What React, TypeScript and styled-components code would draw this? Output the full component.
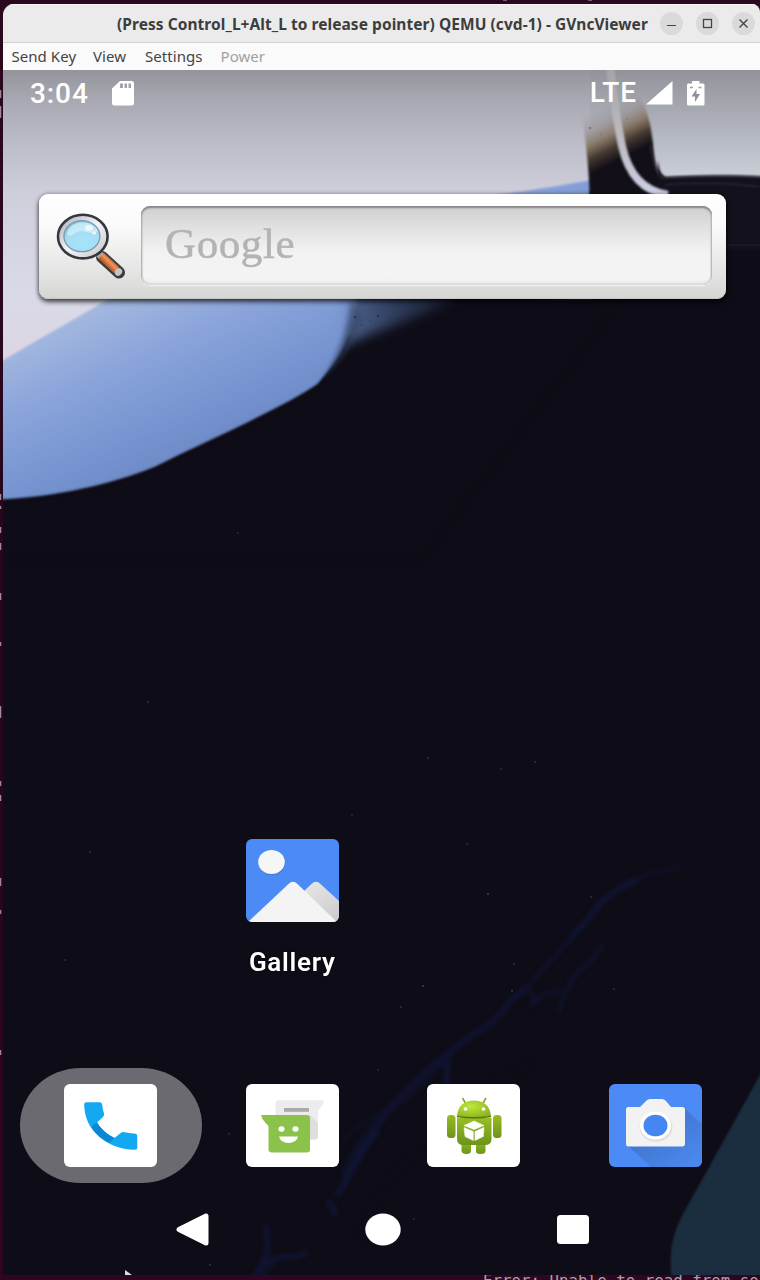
import React from "react";
import styled, { createGlobalStyle } from "styled-components";

const Global = createGlobalStyle`
  * { box-sizing: border-box; }
  html, body { margin: 0; padding: 0; background: #300a24; overflow: hidden; }
`;

const Desktop = styled.div`
  position: relative;
  width: 760px;
  height: 1280px;
  overflow: hidden;
  background: linear-gradient(#2c0820, #26061c 60%, #300522);
  padding: 4px 0 0 3px;
`;

const Window = styled.section`
  display: flex;
  flex-direction: column;
  width: 757px;
  height: 1271px;
  border-radius: 11px 8px 0 0;
  overflow: hidden;
  background: #0e0c17;
`;

const TitleBar = styled.header`
  display: flex;
  align-items: center;
  flex: 0 0 39px;
  height: 39px;
  padding-right: 5px;
  background: #ebebeb;
  border-bottom: 1px solid #d2d2d2;
  box-shadow: inset 0 1px #f6f6f6;
`;

const Title = styled.h1`
  flex: 0 0 531px;
  margin: 0 0 0 114px;
  padding-top: 1px;
  font: 700 15.5px/36px "Noto Sans", "Open Sans", sans-serif;
  letter-spacing: 0.053px;
  white-space: nowrap;
  color: #3d3d3d;
`;

const Controls = styled.div`
  display: flex;
  gap: 13px;
  margin-left: 12px;
`;

const ControlButton = styled.button`
  display: grid;
  place-items: center;
  width: 23px;
  height: 23px;
  padding: 0;
  border: 0;
  border-radius: 50%;
  background: #dadada;
`;

const MenuBar = styled.nav`
  display: flex;
  flex: 0 0 27px;
  height: 27px;
  padding: 0 8px 0 8.5px;
  gap: 16.5px;
  background: #fafafa;
`;

const MenuItem = styled.span<{ $width: number; $disabled?: boolean }>`
  width: ${(p) => p.$width}px;
  font: 400 15px/27px "Noto Sans", "Open Sans", sans-serif;
  letter-spacing: 0.05px;
  white-space: nowrap;
  color: ${(p) => (p.$disabled ? "#a0a0a0" : "#444")};
`;

const Screen = styled.main`
  position: relative;
  display: flex;
  flex-direction: column;
  flex: 1;
  isolation: isolate;
`;

const Wallpaper = styled.svg`
  position: absolute;
  inset: 0;
  z-index: -1;
`;

const StatusBar = styled.div`
  display: flex;
  align-items: center;
  flex: 0 0 46px;
  height: 46px;
  padding: 0 55px 0 27px;
  color: #fff;
`;

const Clock = styled.time`
  width: 82px;
  padding-top: 2px;
  font: 500 28px/44px Roboto, sans-serif;
  letter-spacing: 0.9px;
`;

const Network = styled.span`
  margin-left: auto;
  margin-right: 9px;
  font: 500 28px/46px Roboto, sans-serif;
  letter-spacing: 0.9px;
`;

const StatusIcon = styled.svg<{ $gap?: number }>`
  margin-right: ${(p) => p.$gap ?? 0}px;
`;

const SearchWidget = styled.div`
  display: flex;
  align-items: flex-start;
  width: 687px;
  height: 105px;
  margin: 78px 0 0 36px;
  padding: 12px 14px 13px 17px;
  border-radius: 9px;
  background: linear-gradient(#fff 0, #fafafa 30%, #e4e4e3 75%, #d5d5d4 100%);
  box-shadow: 0 3px 5px rgba(0, 0, 0, 0.65), 0 0 4px rgba(0, 0, 0, 0.35), inset 0 -1px #c6c6c6;
`;

const SearchField = styled.div`
  flex: 1;
  height: 79px;
  margin-left: 15px;
  padding-left: 24px;
  border-radius: 9px;
  background: linear-gradient(#cfcfcf, #dfdfdf 25%, #f2f2f2 58%, #f4f4f4 90%, #ededed);
  box-shadow: inset 0 2px 2px #858585, inset 0 -2px 2px #dcdcdc, inset 1px 0 2px #aaa,
    inset -1px 0 2px #bbb, 0 1px 1px #f4f4f4;
  font: 400 43px/76px "Liberation Serif", serif;
  letter-spacing: 0.6px;
  color: #b3b3b3;
  -webkit-text-stroke: 0.5px #b3b3b3;
`;

const AppGrid = styled.div`
  display: grid;
  grid-template-columns: repeat(4, 181.5px);
  padding-left: 17px;
  margin-top: 540px;
`;

const AppCell = styled.div<{ $column?: number }>`
  grid-column: ${(p) => p.$column ?? "auto"};
  display: flex;
  flex-direction: column;
  align-items: center;
`;

const AppLabel = styled.span`
  margin-top: 25px;
  font: 600 26px/30px Roboto, sans-serif;
  letter-spacing: 0.72px;
  color: #fff;
  text-shadow: 0 0 2px #000;
`;

const Dock = styled.div`
  display: grid;
  grid-template-columns: repeat(4, 181.5px);
  padding-left: 17px;
  margin-top: 91px;
`;

const DockCell = styled.div<{ $focused?: boolean }>`
  display: flex;
  justify-content: center;
  align-items: center;
  height: 115px;
  border-radius: 61px / 57px;
  background: ${(p) => (p.$focused ? "#6b6a70" : "transparent")};
`;

const AppIcon = styled.svg`
  display: block;
  width: 93px;
  height: 83px;
  border-radius: 6px;
`;

const NavBar = styled.div`
  display: flex;
  align-items: center;
  height: 93px;
  padding: 0 171px 0 173px;
  justify-content: space-between;
`;

const Terminal = styled.div`
  position: absolute;
  left: 483px;
  top: 1273px;
  font: 400 15.8px/16px "DejaVu Sans Mono", monospace;
  white-space: pre;
  color: #a99fa7;
`;

const EdgeMarks = styled.svg`
  position: absolute;
  left: 0;
  top: 0;
`;

const specks: [number, number, number][] = [
  [488, 894, 0.6], [591, 897, 0.45], [514, 964, 0.4], [423, 986, 0.6], [401, 1007, 0.4],
  [512, 991, 0.5], [378, 1070, 0.35], [414, 1219, 0.35], [148, 702, 0.4], [238, 533, 0.35],
  [428, 758, 0.4], [535, 762, 0.45], [501, 769, 0.35], [467, 844, 0.4], [614, 989, 0.4],
  [90, 852, 0.45], [65, 960, 0.4], [210, 1265, 0.5], [229, 1134, 0.4], [352, 815, 0.35],
];

function WallpaperArt() {
  return (
    <Wallpaper width="757" height="1205" viewBox="3 70 757 1205">
      <defs>
        <linearGradient id="sky" x1="0" y1="70" x2="0" y2="365" gradientUnits="userSpaceOnUse">
          <stop offset="0" stopColor="#94949b" />
          <stop offset="0.1" stopColor="#a8a8b2" />
          <stop offset="0.24" stopColor="#bcbcc9" />
          <stop offset="0.42" stopColor="#cfcfdc" />
          <stop offset="0.75" stopColor="#d9dae8" />
          <stop offset="1" stopColor="#dcd5e1" />
        </linearGradient>
        <linearGradient id="skyRight" x1="0" y1="70" x2="0" y2="180" gradientUnits="userSpaceOnUse">
          <stop offset="0" stopColor="#92939a" />
          <stop offset="0.5" stopColor="#afb2bb" />
          <stop offset="1" stopColor="#ccd0d7" />
        </linearGradient>
        <linearGradient id="blue" x1="120" y1="290" x2="200" y2="465" gradientUnits="userSpaceOnUse">
          <stop offset="0" stopColor="#a6badf" />
          <stop offset="0.35" stopColor="#8ba5db" />
          <stop offset="0.75" stopColor="#7593d0" />
          <stop offset="1" stopColor="#6c88c4" />
        </linearGradient>
        <linearGradient id="burn" x1="600" y1="105" x2="628" y2="161" gradientUnits="userSpaceOnUse">
          <stop offset="0" stopColor="#a09da4" stopOpacity="0" />
          <stop offset="0.28" stopColor="#989094" stopOpacity="0.6" />
          <stop offset="0.5" stopColor="#85745f" stopOpacity="0.9" />
          <stop offset="0.7" stopColor="#463a31" />
          <stop offset="0.92" stopColor="#120f18" />
        </linearGradient>
        <linearGradient id="cord" x1="0" y1="70" x2="0" y2="194" gradientUnits="userSpaceOnUse">
          <stop offset="0" stopColor="#a6a5aa" />
          <stop offset="0.5" stopColor="#bab9c0" />
          <stop offset="1" stopColor="#cdcfe4" />
        </linearGradient>
        <linearGradient id="spray" x1="350" y1="0" x2="470" y2="0" gradientUnits="userSpaceOnUse">
          <stop offset="0" stopColor="#6684bc" />
          <stop offset="0.4" stopColor="#3b4f78" />
          <stop offset="1" stopColor="#151726" />
        </linearGradient>
        <filter id="b1" colorInterpolationFilters="sRGB"><feGaussianBlur stdDeviation="0.8" /></filter>
        <filter id="b2" colorInterpolationFilters="sRGB"><feGaussianBlur stdDeviation="2.2" /></filter>
        <filter id="b6" x="-40%" y="-40%" width="180%" height="180%" colorInterpolationFilters="sRGB"><feGaussianBlur stdDeviation="6" /></filter>
      </defs>
      <rect x="3" y="70" width="757" height="1205" fill="#0e0c16" />
      <path d="M3 70H592V240L3 470Z" fill="url(#sky)" />
      <path d="M590 70H760V180H660L640 190L590 185Z" fill="url(#skyRight)" />
      <path d="M-10 368C25 347 63 326 105 301C230 235 380 214 510 193C545 188 570 184 592 180V300H356C352 340 342 355 318 384C280 410 200 444 155 467C110 485 50 499 -10 500Z" fill="url(#blue)" filter="url(#b1)" />
      <path d="M357 290C350 340 342 358 318 386C280 412 200 446 155 469C110 487 50 501 -20 502V560H420L620 300Z" fill="#0e0c16" filter="url(#b2)" />
      <path d="M345 285H475C445 308 400 322 346 344Z" fill="url(#spray)" opacity="0.7" filter="url(#b6)" />
      <path d="M350 300C348 322 342 345 322 380C342 360 355 345 364 318Z" fill="#344868" opacity="0.5" filter="url(#b2)" />
      <path d="M578 95H636C647 104 651 125 653 143C654 160 656 170 661 178V205H590C589 165 585 130 578 95Z" fill="url(#burn)" filter="url(#b1)" />
      <path d="M590 191H660V230H590ZM658 160C659 169 660 174 666 177Q715 174 770 177V250H650Z" fill="#13111b" filter="url(#b1)" />
      <path d="M650 145C653 158 655 170 662 178Q720 175 760 177" fill="none" stroke="#302c3a" strokeWidth="2" opacity="0.7" filter="url(#b1)" />
      <path d="M665 185Q710 180 760 187" fill="none" stroke="#252230" strokeWidth="2" filter="url(#b1)" />
      <path d="M725 245H760" stroke="#1b1826" strokeWidth="2" />
      <path d="M610 66C613 94 617 122 622 146C628 173 642 191 668 195" fill="none" stroke="url(#cord)" strokeWidth="8" filter="url(#b1)" />
      <g fill="#6d6059" opacity="0.6">
        <circle cx="590" cy="128" r="1.3" /><circle cx="601" cy="134" r="0.7" /><circle cx="594" cy="149" r="0.7" />
        <circle cx="598" cy="143" r="0.7" /><circle cx="627" cy="119" r="0.8" /><circle cx="591" cy="155" r="0.8" />
      </g>
      <g fill="#1b2740" opacity="0.6">
        <circle cx="355" cy="317" r="1.3" /><circle cx="378" cy="316" r="1.2" /><circle cx="362" cy="325" r="0.8" />
        <circle cx="370" cy="321" r="0.7" /><circle cx="354" cy="347" r="1.2" /><circle cx="391" cy="318" r="0.7" />
      </g>
      <g fill="none" stroke="#10163a" strokeLinejoin="round" filter="url(#b2)">
        <path d="M682 866C650 872 638 878 627 886" strokeWidth="3" opacity="0.6" />
        <path d="M636 880C614 890 600 902 592 914C584 926 577 930 570 938" strokeWidth="6" opacity="0.8" />
        <path d="M574 935C560 952 545 966 535 978C527 990 518 995 510 1001" strokeWidth="3.5" opacity="0.75" />
        <path d="M526 988L508 1003C500 1020 480 1030 468 1038C455 1047 443 1058 436 1066" strokeWidth="6" opacity="0.75" />
        <path d="M603 945L592 960C576 972 570 980 566 992L558 1012M562 992C545 990 538 1000 530 1006M530 990L536 1004" strokeWidth="4" opacity="0.75" />
        <path d="M440 1060L418 1080C400 1098 388 1108 378 1124C362 1140 350 1160 344 1178" strokeWidth="8" opacity="0.6" />
        <path d="M470 1038C450 1054 430 1078 406 1100C385 1112 360 1120 340 1145" strokeWidth="3" opacity="0.5" />
        <path d="M448 1062L446 1086M378 1130C360 1150 348 1182 336 1196M328 1200L336 1215" strokeWidth="6" opacity="0.8" />
        <path d="M308 1252C290 1262 280 1252 268 1264M266 1225C267 1246 270 1252 264 1260C260 1270 255 1274 250 1284" strokeWidth="5" opacity="0.85" />
        <path d="M272 1260L252 1284" strokeWidth="10" opacity="0.5" />
        <path d="M425 1150C390 1170 370 1200 360 1240M535 1062C505 1080 470 1090 445 1095" strokeWidth="2" opacity="0.3" />
      </g>
      <path d="M765 1066C735 1120 700 1184 683 1214C671 1237 669 1255 672 1280H765Z" fill="#1b2e40" filter="url(#b1)" />
      <g fill="#656171">
        {specks.map(([x, y, o]) => <circle key={x + "-" + y} cx={x} cy={y} r="1" opacity={o} />)}
      </g>
      <path d="M125 1270L132 1275H125Z" fill="#ddd" />
    </Wallpaper>
  );
}

function Magnifier() {
  return (
    <svg width="70" height="76" viewBox="0 0 70 76">
      <defs>
        <radialGradient id="glass" cx="0.55" cy="0.7" r="0.7">
          <stop offset="0" stopColor="#a4e4fa" />
          <stop offset="0.7" stopColor="#a6dcf2" />
          <stop offset="1" stopColor="#7bb8d8" />
        </radialGradient>
        <linearGradient id="rim" x1="0" y1="0" x2="1" y2="1">
          <stop offset="0" stopColor="#a4a9b2" />
          <stop offset="0.5" stopColor="#f3f4f6" />
          <stop offset="1" stopColor="#c0c2c8" />
        </linearGradient>
        <linearGradient id="wood" x1="47" y1="58" x2="55" y2="50" gradientUnits="userSpaceOnUse">
          <stop offset="0" stopColor="#a84818" />
          <stop offset="0.55" stopColor="#f0945c" />
          <stop offset="1" stopColor="#b0491a" />
        </linearGradient>
      </defs>
      <path d="M46 51L63 66.500" stroke="#3b3a3e" strokeWidth="12" strokeLinecap="round" />
      <path d="M41 46L46 51" stroke="#a9abb0" strokeWidth="7" />
      <path d="M45 49.800L60.500 64" stroke="url(#wood)" strokeWidth="8" />
      <ellipse cx="62.500" cy="66" rx="3.400" ry="4" fill="#c9c5c3" transform="rotate(42 62.500 66)" />
      <ellipse cx="26.800" cy="30.600" rx="24.800" ry="21.800" fill="url(#rim)" stroke="#34373c" strokeWidth="2.600" />
      <ellipse cx="25.900" cy="30.200" rx="18" ry="15.500" fill="url(#glass)" stroke="#7f98aa" strokeWidth="1.300" />
      <path d="M11 29C11 15 35 11 42 25C36 30 28 24 24 25S16 31 11 29Z" fill="#cdeefa" opacity="0.8" />
      <ellipse cx="33" cy="22" rx="4" ry="3" fill="#ecfaff" />
      <ellipse cx="38" cy="27" rx="2" ry="1.800" fill="#e4f7fe" />
    </svg>
  );
}

function GalleryIcon() {
  return (
    <AppIcon viewBox="0 0 93 83">
      <defs>
        <linearGradient id="shade" x1="66" y1="45" x2="85" y2="83" gradientUnits="userSpaceOnUse">
          <stop offset="0" stopColor="#e5e4e5" /><stop offset="1" stopColor="#cccbcd" />
        </linearGradient>
      </defs>
      <rect width="93" height="83" fill="#4c8bf5" />
      <ellipse cx="26" cy="24.500" rx="13" ry="12" fill="#356fc9" opacity="0.5" />
      <ellipse cx="25.500" cy="23" rx="13.300" ry="12" fill="#f6f6f6" />
      <path d="M40 69L65.500 45Q70 40.500 74.500 45L93 62V83H50Z" fill="url(#shade)" />
      <path d="M2 83L42.500 45Q47 40.500 51.500 45L91 83Z" fill="#f4f4f4" />
    </AppIcon>
  );
}

function PhoneIcon() {
  return (
    <AppIcon viewBox="0 0 93 83">
      <rect width="93" height="83" fill="#fff" />
      <path d="M22.500 18.200H35.500Q38 18.200 38.200 20.500Q38.500 25 40 29.500Q40.500 31.300 39 33L33 38.500C37 45 43 50.500 50.500 54L57 48.700Q58.500 47.700 60.500 48.200Q65 49.300 70 49.500Q73.300 49.700 73.300 52.200V63.500Q73.300 66 70.500 65.800C42 65 20.500 46 20.200 21Q20 18.200 22.500 18.200Z" fill="#12a9f2" />
      <path d="M33 38.300C37 45 43 50.500 50.500 54L45 58.800C37 54.500 31 49 27.500 42.500Z" fill="#0c87d4" />
    </AppIcon>
  );
}

function MessagesIcon() {
  return (
    <AppIcon viewBox="0 0 93 83">
      <rect width="93" height="83" fill="#fff" />
      <path d="M32 16.200H78Q77.500 21 72 27V52.500Q72 55.500 68.500 55.500H32Q29.500 55.500 29.500 53V19Q29.500 16.200 32 16.200Z" fill="#ececec" />
      <path d="M64 31L72 39V52.500Q72 55.500 68.500 55.500H64Z" fill="#dedede" />
      <rect x="38" y="24" width="25" height="3.800" fill="#aaa" />
      <path d="M15 31H61Q64 31 64 34V65.500Q64 68.500 61 68.500H26Q22.500 68.500 22.500 65.500V42Q16 36 15 31Z" fill="#8bc34a" />
      <ellipse cx="35.500" cy="45" rx="3" ry="2.700" fill="#fff" />
      <ellipse cx="49.500" cy="45" rx="3" ry="2.700" fill="#fff" />
      <path d="M33 52.500H52Q50.500 59 42.500 59T33 52.500Z" fill="#fff" />
    </AppIcon>
  );
}

function AndroidIcon() {
  return (
    <AppIcon viewBox="0 0 93 83">
      <defs>
        <linearGradient id="droid" x1="0" y1="0" x2="0" y2="1">
          <stop offset="0" stopColor="#98bd22" /><stop offset="1" stopColor="#6c941a" />
        </linearGradient>
        <radialGradient id="dome" cx="0.4" cy="0.35" r="0.75">
          <stop offset="0" stopColor="#c0e83e" /><stop offset="1" stopColor="#88b01d" />
        </radialGradient>
      </defs>
      <rect width="93" height="83" fill="#fff" />
      <path d="M35.500 14L39 20M59 14L55.500 20" stroke="#83a431" strokeWidth="1.600" />
      <g fill="url(#droid)">
        <rect x="20" y="31" width="8.500" height="23" rx="3.500" />
        <rect x="66" y="31" width="8.500" height="23" rx="3.500" />
        <path d="M34.500 55H44V67Q44 70 39.500 70T34.500 67Z" />
        <path d="M49 55H58.500V67Q58.500 70 53.500 70T49 67Z" />
        <path d="M30 34H64.500V55Q64.500 61 58 61H36.500Q30 61 30 55Z" />
      </g>
      <path d="M30 32C31 21 38 16.500 47 16.500S63 21 64 32Q47 35 30 32Z" fill="url(#dome)" />
      <path d="M30 32.500Q47 35 64 32.500" stroke="#547912" strokeWidth="1.300" fill="none" />
      <ellipse cx="38.500" cy="25" rx="1.900" ry="1.800" fill="#fff" />
      <ellipse cx="56.500" cy="25" rx="1.900" ry="1.800" fill="#fff" />
      <path d="M47 37L57 41.500L47 45.500L37 41.500ZM37 43.500L46.300 47.500V56.500L38 52.500ZM47.900 47.500L57 43.500L56.300 52.500L47.900 56.500Z" fill="#fff" stroke="#fff" strokeWidth="0.500" />
    </AppIcon>
  );
}

function CameraIcon() {
  return (
    <AppIcon viewBox="0 0 93 83">
      <defs>
        <linearGradient id="cast" x1="50" y1="45" x2="80" y2="83" gradientUnits="userSpaceOnUse">
          <stop offset="0" stopColor="#4378d2" /><stop offset="1" stopColor="#4a87ee" />
        </linearGradient>
      </defs>
      <rect width="93" height="83" fill="#4c8bf5" />
      <path d="M75 24L93 40V83H42L17 60Z" fill="url(#cast)" />
      <path d="M19 23H31L37.500 16.500Q39 15 41 15H53Q55 15 56.500 16.500L62 23H73Q76 23 76 25.500V60Q76 62.500 73 62.500H19.500Q17 62.500 17 60V25.500Q17 23 19 23Z" fill="#f2f2f2" />
      <ellipse cx="47" cy="43" rx="16.500" ry="15" fill="#d8d8d8" opacity="0.7" />
      <ellipse cx="46.500" cy="41.500" rx="15.500" ry="14" fill="#fff" />
      <ellipse cx="46.500" cy="41.500" rx="12" ry="10.800" fill="#4586f3" />
    </AppIcon>
  );
}

export default function App() {
  return (
    <Desktop>
      <Global />
      <Terminal>Error: Unable to read from so</Terminal>
      <Window>
        <TitleBar>
          <Title>(Press Control_L+Alt_L to release pointer) QEMU (cvd-1) - GVncViewer</Title>
          <Controls>
            <ControlButton aria-label="Minimize">
              <svg width="11" height="11"><path d="M1 7.500H10" stroke="#444" strokeWidth="1.200" /></svg>
            </ControlButton>
            <ControlButton aria-label="Maximize">
              <svg width="11" height="11"><rect x="1.500" y="1.500" width="8" height="8" fill="none" stroke="#444" strokeWidth="1.300" /></svg>
            </ControlButton>
            <ControlButton aria-label="Close">
              <svg width="11" height="11"><path d="M1.500 1.500L9.500 9.500M9.500 1.500L1.500 9.500" stroke="#444" strokeWidth="1.400" /></svg>
            </ControlButton>
          </Controls>
        </TitleBar>
        <MenuBar>
          <MenuItem $width={65}>Send Key</MenuItem>
          <MenuItem $width={35.5}>View</MenuItem>
          <MenuItem $width={59}>Settings</MenuItem>
          <MenuItem $width={46} $disabled>Power</MenuItem>
        </MenuBar>
        <Screen>
          <WallpaperArt />
          <StatusBar>
            <Clock>3:04</Clock>
            <StatusIcon width="22" height="25" viewBox="0 0 22 25">
              <path d="M8 0H19.500Q22 0 22 2.500V22Q22 24.500 19.500 24.500H2.500Q0 24.500 0 22V7.500Z" fill="#fff" />
              <path d="M8 2.500H11V7H8ZM12.500 2.500H15V7H12.500ZM16.500 2.500H19V7H16.500Z" fill="#a2a2ad" />
            </StatusIcon>
            <Network>LTE</Network>
            <StatusIcon $gap={14} width="27" height="24" viewBox="0 0 27 24"><path d="M26.500 0V23.500H0Z" fill="#fff" /></StatusIcon>
            <StatusIcon width="18" height="25" viewBox="0 0 18 25">
              <path d="M5 0H12.500V2.500H16Q17.500 2.500 17.500 4V23Q17.500 24.500 16 24.500H1.500Q0 24.500 0 23V4Q0 2.500 1.500 2.500H5Z" fill="#fff" />
              <path d="M9.500 8L4.500 15.500H8V21L13 13H9.500Z" fill="#8f9097" />
              <path d="M3 6.500H6M11.500 6.500H14.500" stroke="#a0a1a7" strokeWidth="1.500" />
            </StatusIcon>
          </StatusBar>
          <SearchWidget>
            <Magnifier />
            <SearchField>Google</SearchField>
          </SearchWidget>
          <AppGrid>
            <AppCell $column={2}>
              <GalleryIcon />
              <AppLabel>Gallery</AppLabel>
            </AppCell>
          </AppGrid>
          <Dock>
            <DockCell $focused><PhoneIcon /></DockCell>
            <DockCell><MessagesIcon /></DockCell>
            <DockCell><AndroidIcon /></DockCell>
            <DockCell><CameraIcon /></DockCell>
          </Dock>
          <NavBar>
            <svg width="33" height="33"><path d="M30 3V30L3 16.500Z" fill="#fff" stroke="#fff" strokeWidth="5" strokeLinejoin="round" /></svg>
            <svg width="36" height="33"><ellipse cx="18" cy="16.500" rx="17.700" ry="16" fill="#fff" /></svg>
            <svg width="32" height="29"><rect width="32" height="29" rx="3.500" fill="#fff" /></svg>
          </NavBar>
        </Screen>
      </Window>
      <EdgeMarks width="760" height="1280">
        <path d="M0 90v8M0 106v12M0 494v6M0 506v3M0 527v6M0 543v7M0 593v7M0 642v4M0 706v12M0 781v5M0 795v6M0 878v8M0 910v4M0 1050v5" stroke="#9d8998" strokeWidth="2.500" />
        <path d="M503 0h4M588 0h4" stroke="#8d7887" strokeWidth="1.500" />
      </EdgeMarks>
    </Desktop>
  );
}
